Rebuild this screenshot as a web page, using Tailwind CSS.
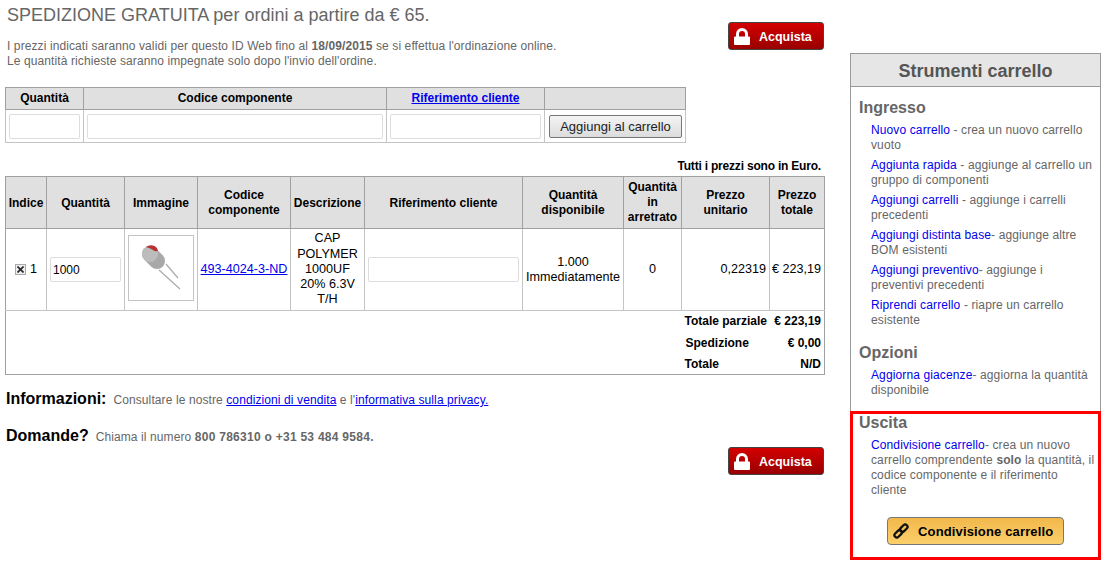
<!DOCTYPE html>
<html lang="en">
<head>
  <meta charset="UTF-8" />
  <title>Carrello</title>
  <script src="https://cdn.jsdelivr.net/npm/@tailwindcss/browser@4"></script>
</head>
<body class="bg-white text-[12px] leading-[15px] text-[#666] font-['Liberation_Sans',Arial,sans-serif] overflow-hidden">
<div class="flex w-[1108px] h-[569px] pl-[5px]">

  <!-- Main column -->
  <main class="w-[820px] shrink-0">
    <div class="flex justify-between pr-px">
      <div class="pl-[2px]">
        <h1 class="text-[18px] leading-[21px] pt-[5px] text-[#666]">SPEDIZIONE GRATUITA per ordini a partire da € 65.</h1>
        <p class="mt-[13px] tracking-[0.1px]">I prezzi indicati saranno validi per questo ID Web fino al <b>18/09/2015</b> se si effettua l'ordinazione online.<br />Le quantità richieste saranno impegnate solo dopo l'invio dell'ordine.</p>
      </div>
      <a class="mt-[22px] flex items-center w-[96px] h-[28px] pl-[5px] gap-[9px] rounded-[3px] border border-[#444] bg-gradient-to-b from-[#d40000] to-[#990000] text-white font-bold text-[12.5px]">
        <svg width="16" height="17" viewBox="0 0 16 17"><path d="M2 9V6a6 6 0 0 1 12 0v3h-3V6a3 3 0 0 0-6 0v3z" fill="#fff"/><rect y="8.5" width="16" height="8.5" rx="1" fill="#fff"/></svg>
        <span class="pt-[2px]">Acquista</span>
      </a>
    </div>

    <!-- Quick add -->
    <table class="table-fixed border-collapse w-[680px] mt-[18px] text-black">
      <colgroup><col class="w-[78px]" /><col class="w-[303px]" /><col class="w-[158px]" /><col class="w-[141px]" /></colgroup>
      <thead>
        <tr class="h-[22px] bg-[#e0e0e0] font-bold">
          <th class="border border-[#a0a0a0]">Quantità</th>
          <th class="border border-[#a0a0a0]">Codice componente</th>
          <th class="border border-[#a0a0a0]"><a class="text-[#0000ee] underline">Riferimento cliente</a></th>
          <th class="border border-[#a0a0a0]"></th>
        </tr>
      </thead>
      <tbody>
        <tr class="h-[33px]">
          <td class="border border-[#c4c4c4] px-[3px]"><input class="block w-full h-[25px] border border-[#ddd] rounded-[2px]" /></td>
          <td class="border border-[#c4c4c4] px-[3px]"><input class="block w-full h-[25px] border border-[#ddd] rounded-[2px]" /></td>
          <td class="border border-[#c4c4c4] px-[3px]"><input class="block w-full h-[25px] border border-[#ddd] rounded-[2px]" /></td>
          <td class="border border-[#c4c4c4] px-[4px]"><button class="w-[133px] h-[23px] border border-[#777] rounded-[2px] bg-gradient-to-b from-[#f4f4f4] to-[#dcdcdc] text-[#222] text-[13px]">Aggiungi al carrello</button></td>
        </tr>
      </tbody>
    </table>

    <p class="mt-[16px] mb-[2px] text-right pr-[4px] font-bold text-black tracking-[-0.2px]">Tutti i prezzi sono in Euro.</p>

    <!-- Cart table -->
    <table class="table-fixed border-collapse w-[819px] text-black">
      <colgroup>
        <col class="w-[41px]" /><col class="w-[78px]" /><col class="w-[73px]" /><col class="w-[93px]" /><col class="w-[74px]" />
        <col class="w-[158px]" /><col class="w-[101px]" /><col class="w-[58px]" /><col class="w-[88px]" /><col class="w-[55px]" />
      </colgroup>
      <thead>
        <tr class="h-[52px] bg-[#e0e0e0] font-bold text-center">
          <th class="border border-[#a0a0a0] pt-px">Indice</th>
          <th class="border border-[#a0a0a0] pt-px">Quantità</th>
          <th class="border border-[#a0a0a0] pt-px">Immagine</th>
          <th class="border border-[#a0a0a0]">Codice componente</th>
          <th class="border border-[#a0a0a0] pt-px">Descrizione</th>
          <th class="border border-[#a0a0a0] pt-px">Riferimento cliente</th>
          <th class="border border-[#a0a0a0]">Quantità<br />disponibile</th>
          <th class="border border-[#a0a0a0]">Quantità<br />in<br />arretrato</th>
          <th class="border border-[#a0a0a0]">Prezzo<br />unitario</th>
          <th class="border border-[#a0a0a0]">Prezzo<br />totale</th>
        </tr>
      </thead>
      <tbody>
        <tr class="h-[82px] text-center text-[12.6px]">
          <td class="border border-[#c4c4c4] border-l-[#a0a0a0]">
            <div class="flex items-center justify-center gap-[4px]">
              <span class="flex w-[11px] h-[11px] items-center justify-center border border-[#aaa] bg-[#eee]">
                <svg width="7" height="7" viewBox="0 0 7 7"><path d="M.5.5l6 6M6.5.5l-6 6" stroke="#222" stroke-width="1.6"/></svg>
              </span>1
            </div>
          </td>
          <td class="border border-[#c4c4c4] px-[3px]"><input value="1000" class="block w-[71px] h-[25px] px-[2px] border border-[#ddd] rounded-[2px] text-black text-[12px]" /></td>
          <td class="border border-[#c4c4c4] px-[3px] pt-[6px] align-top">
            <div class="w-[66px] h-[66px] border border-[#c4c4c4]">
              <svg width="64" height="64" viewBox="0 0 64 64">
                <path d="M30 34L51 53M37 28L49 42" stroke="#aaa" stroke-width="1.2"/>
                <path d="M21 18L28 25" stroke="#a8a8a8" stroke-width="16" stroke-linecap="round"/>
                <circle cx="21" cy="18" r="8" fill="#bcbcbc"/>
                <path d="M17 11a8 8 0 0 1 11 1l1 3q-3 1-5-1-3-2-7-3z" fill="#b83232"/>
              </svg>
            </div>
          </td>
          <td class="border border-[#c4c4c4]"><a class="text-[#0000ee] underline">493-4024-3-ND</a></td>
          <td class="border border-[#c4c4c4] whitespace-nowrap leading-[15.25px]">CAP<br />POLYMER<br />1000UF<br />20% 6.3V<br />T/H</td>
          <td class="border border-[#c4c4c4] px-[3px]"><input class="block w-full h-[25px] border border-[#ddd] rounded-[2px]" /></td>
          <td class="border border-[#c4c4c4]">1.000<br />Immediatamente</td>
          <td class="border border-[#c4c4c4]">0</td>
          <td class="border border-[#c4c4c4] text-right pr-[3px]">0,22319</td>
          <td class="border border-[#c4c4c4] border-r-[#a0a0a0] text-right pr-[3px] whitespace-nowrap">€ 223,19</td>
        </tr>
        <tr class="h-[22px] font-bold">
          <td colspan="8" class="border-l border-[#a0a0a0]"></td>
          <td class="pl-[3px]">Totale parziale</td>
          <td class="border-r border-[#a0a0a0] text-right pr-[3px] whitespace-nowrap">€ 223,19</td>
        </tr>
        <tr class="h-[21px] font-bold">
          <td colspan="8" class="border-l border-[#a0a0a0]"></td>
          <td class="pl-[4px]">Spedizione</td>
          <td class="border-r border-[#a0a0a0] text-right pr-[3px]">€ 0,00</td>
        </tr>
        <tr class="h-[21px] font-bold border-b border-[#a0a0a0]">
          <td colspan="8" class="border-l border-[#a0a0a0]"></td>
          <td class="pl-[3px] pt-px">Totale</td>
          <td class="border-r border-[#a0a0a0] text-right pr-[3px] pt-px">N/D</td>
        </tr>
      </tbody>
    </table>

    <div class="mt-[14px] pl-px flex items-baseline gap-[7px]">
      <strong class="text-[16px] leading-[20px] text-black">Informazioni:</strong>
      <span class="tracking-[0.1px]">Consultare le nostre <a class="text-[#0000ee] underline">condizioni di vendita</a> e l'<a class="text-[#0000ee] underline">informativa sulla privacy.</a></span>
    </div>
    <div class="mt-[17px] pl-px flex items-baseline gap-[7px]">
      <strong class="text-[16px] leading-[20px] text-black">Domande?</strong>
      <span class="tracking-[0.1px]">Chiama il numero <b class="tracking-[0.27px]">800 786310 o +31 53 484 9584.</b></span>
    </div>

    <div class="flex justify-end mt-px pr-px">
      <a class="flex items-center w-[96px] h-[28px] pl-[5px] gap-[9px] rounded-[3px] border border-[#444] bg-gradient-to-b from-[#d40000] to-[#990000] text-white font-bold text-[12.5px]">
        <svg width="16" height="17" viewBox="0 0 16 17"><path d="M2 9V6a6 6 0 0 1 12 0v3h-3V6a3 3 0 0 0-6 0v3z" fill="#fff"/><rect y="8.5" width="16" height="8.5" rx="1" fill="#fff"/></svg>
        <span class="pt-[2px]">Acquista</span>
      </a>
    </div>
  </main>

  <!-- Sidebar -->
  <aside class="ml-[25px] mt-[53px] w-[251px] shrink-0 tracking-[0.12px]">
    <div class="border border-b-0 border-[#999] h-[359px]">
      <h2 class="h-[33px] pt-[2px] flex items-center justify-center bg-[#e6e6e6] border-b border-[#999] text-[18px] font-bold text-[#555] tracking-normal">Strumenti carrello</h2>
      <h3 class="mt-[12px] ml-[8px] text-[16px] leading-[18px] font-bold text-[#666] tracking-normal">Ingresso</h3>
      <ul class="mt-[6px] ml-[20px] w-[226px]">
        <li class="mb-[5px]"><a class="text-[#0000ee]">Nuovo carrello</a> - crea un nuovo carrello vuoto</li>
        <li class="mb-[5px]"><a class="text-[#0000ee]">Aggiunta rapida</a> - aggiunge al carrello un gruppo di componenti</li>
        <li class="mb-[5px]"><a class="text-[#0000ee]">Aggiungi carrelli</a> - aggiunge i carrelli precedenti</li>
        <li class="mb-[5px]"><a class="text-[#0000ee]">Aggiungi distinta base</a>- aggiunge altre BOM esistenti</li>
        <li class="mb-[5px]"><a class="text-[#0000ee]">Aggiungi preventivo</a>- aggiunge i preventivi precedenti</li>
        <li><a class="text-[#0000ee]">Riprendi carrello</a> - riapre un carrello esistente</li>
      </ul>
      <h3 class="mt-[16px] ml-[8px] text-[16px] leading-[18px] font-bold text-[#666] tracking-normal">Opzioni</h3>
      <ul class="mt-[6px] ml-[20px] w-[226px]">
        <li><a class="text-[#0000ee]">Aggiorna giacenze</a>- aggiorna la quantità disponibile</li>
      </ul>
    </div>
    <section class="h-[149px] border-[3px] border-[#f00] pl-[6px] -mt-[1px]">
      <h3 class="text-[16px] leading-[18px] font-bold text-[#666] tracking-normal">Uscita</h3>
      <p class="mt-[6px] ml-[12px] w-[224px]"><a class="text-[#0000ee]">Condivisione carrello</a>- crea un nuovo carrello comprendente <b>solo</b> la quantità, il codice componente e il riferimento cliente</p>
      <a class="mt-[19px] ml-[28px] flex items-center pl-[5px] gap-[9px] w-[177px] h-[28px] rounded-[4px] border border-[#777] bg-gradient-to-b from-[#f2b84b] to-[#fbcf6a] text-black font-bold text-[13px] tracking-[0.15px]">
        <svg width="16" height="16" viewBox="0 0 17 17" fill="none" stroke="#111" stroke-width="2.4"><rect x="9" y="1" width="5" height="9" rx="2.5" transform="rotate(45 11.5 5.5)"/><rect x="3" y="7" width="5" height="9" rx="2.5" transform="rotate(45 5.5 11.5)"/></svg>
        <span>Condivisione carrello</span>
      </a>
    </section>
  </aside>
</div>
</body>
</html>
